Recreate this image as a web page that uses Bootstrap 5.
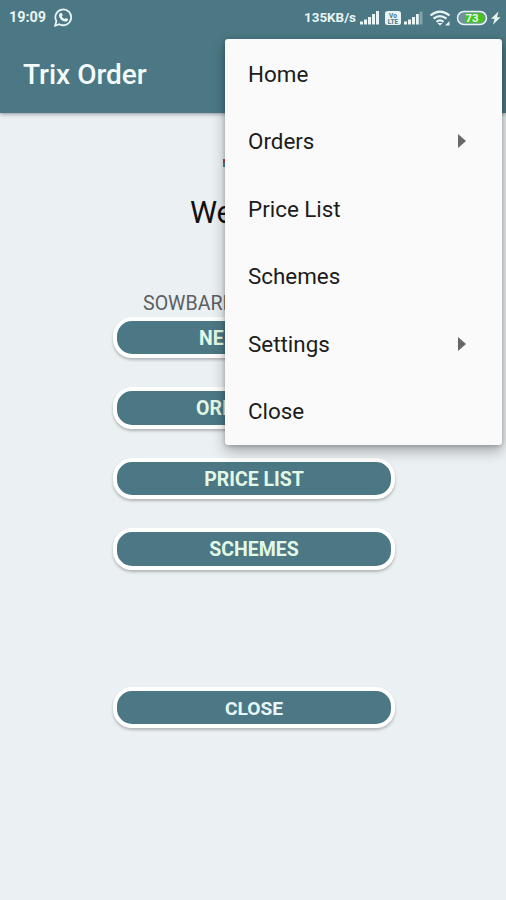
<!DOCTYPE html>
<html lang="en">
<head>
<meta charset="utf-8">
<meta name="viewport" content="width=device-width, initial-scale=1">
<title>Trix Order</title>
<link href="https://cdn.jsdelivr.net/npm/bootstrap@5.3.0/dist/css/bootstrap.min.css" rel="stylesheet">
<style>
body{font-family:Roboto,"Liberation Sans",sans-serif;background:#ebf0f3;height:900px;overflow:hidden}
.top-area{background:#4b7884;height:112.5px;box-shadow:0 1px 4px rgba(40,50,70,.5)}
.status-bar{height:35px;padding:0 4px 0 9px;color:#e9f4f5;font-size:14.4px;font-weight:700;line-height:36px}
.status-bar svg{display:block;flex:none}
.net-speed{font-size:13.4px}
.app-title{height:77px;padding:2px 0 0 23px;color:#f4fbfc;font-size:28px;font-weight:500}
.screen{width:282px;margin-left:113px}
.logo-line{height:46px;margin-top:2.5px;padding:44px 0 0 110px}
.logo-line svg{display:block}
.welcome{font-size:30.5px;line-height:36px;margin-top:34px;padding-left:77px;color:#111}
.company{font-size:19.6px;line-height:24px;margin-top:60.5px;padding-left:30px;color:#5c6062}
.button-stack{margin-top:1px}
.pill{height:41.5px;border:4.5px solid #fff;border-radius:19px;background:#4b7884;color:#e3f9e6;font-size:19.5px;font-weight:700;line-height:32px;padding:2px 0 0;box-shadow:0 2px 3px rgba(0,0,0,.25);margin-bottom:29px}
.pill-new{text-align:left;padding-left:82px}
.pill-orders{text-align:left;padding-left:79px}
.pill-close{margin-top:117px;color:#e7f6fa;font-size:19.2px}
.overflow-menu{left:225px;top:39px;width:277px;height:406px;border:0;border-radius:3px;background:#fafafa;padding:1px 0 0;box-shadow:0 6px 14px rgba(0,0,0,.3),0 1px 4px rgba(0,0,0,.2)}
.overflow-menu .dropdown-item{height:67.5px;padding:2px 36px 0 23px;font-size:22.4px;color:#1c1c1c}
.overflow-menu svg{margin-bottom:2px}
</style>
</head>
<body>
<header class="top-area">
  <div class="status-bar d-flex align-items-center">
    <span>19:09</span>
    <svg class="ms-2" width="19" height="19" viewBox="0 0 19 19" fill="none" stroke="#e9f4f5"><path stroke-width="1.8" d="M1.2 17.6l1.2-4.4a7.9 7.9 0 1 1 3 3z"/><path stroke="none" fill="#e9f4f5" d="M6.4 4.9h1.3l1 2.4-.9 1.2c.7 1.3 1.6 2 2.8 2.6l1.1-1.2 2.4 1.1c0 1.7-1.1 2.6-2.4 2.6-3.7-.4-6.3-3-6.8-6.2 0-1 .7-2.1 1.5-2.5z"/></svg>
    <div class="d-flex align-items-center ms-auto">
      <span class="net-speed">135KB/s</span>
      <svg width="146" height="18" viewBox="0 0 146 18" fill="#e9f4f5">
        <path d="M4 15.500v-3h3v3zM8 15.500v-5h3v5zM12 15.500V8h3v7.500zM16 15.500V5h3v10.500zM20 15.500V2h3v13.500z"/>
        <rect x="29" y="2" width="16" height="14" rx="2.500"/>
        <text x="37" y="8.500" font-size="6.500" font-weight="700" text-anchor="middle" fill="#4b7884">Vo</text>
        <text x="37" y="14.800" font-size="6.500" font-weight="700" text-anchor="middle" fill="#4b7884">LTE</text>
        <path d="M48 15.500v-3h3v3zM52 15.500v-5h3v5zM56 15.500V8h3v7.500zM60 15.500V5h2.800v10.500z"/><path opacity=".35" d="M63.500 15.500V2.500h3v13z"/>
        <g fill="none" stroke="#e9f4f5" stroke-width="2.200"><path d="M74.500 6.500q9.500-7.600 19 0M77.500 9.700q6.500-5.200 13 0M80.500 12.800q3.500-2.700 7 0"/></g>
        <path d="M81.500 14h5L84 16.800zM89 16.500l4.500-4.500v4.500z"/>
        <rect x="101.500" y="2.500" width="29" height="13" rx="6.500" fill="#6e939b" stroke="#e9f4f5" stroke-width="1.500"/>
        <path fill="#45c51c" d="M109 4.300h15.500q3.800 1 3.800 4.700t-3.800 4.700H109z"/>
        <text x="116" y="13.200" font-size="11.500" font-weight="700" text-anchor="middle">73</text>
        <path d="M142.500 2.500l-7.500 7.300h3.500l-1.500 6 7.500-7.500H141z"/>
      </svg>
    </div>
  </div>
  <div class="app-title d-flex align-items-center">Trix Order</div>
</header>

<main class="screen">
  <div class="logo-line"><svg width="4" height="9" viewBox="0 0 4 9"><path fill="#b5475f" d="M0 0h4v4H0z"/><path fill="#4287a4" d="M0 4h4v4H0z"/></svg></div>
  <div class="welcome">We</div>
  <div class="company">SOWBARI</div>
  <div class="button-stack d-flex flex-column">
    <button class="btn pill pill-new" type="button">NE</button>
    <button class="btn pill pill-orders" type="button">ORI</button>
    <button class="btn pill" type="button">PRICE LIST</button>
    <button class="btn pill mb-0" type="button">SCHEMES</button>
    <button class="btn pill pill-close" type="button">CLOSE</button>
  </div>
</main>

<div class="dropdown-menu overflow-menu show">
  <a class="dropdown-item d-flex align-items-center" href="#">Home</a>
  <a class="dropdown-item d-flex align-items-center justify-content-between" href="#">Orders<svg width="8" height="14" viewBox="0 0 8 14"><path fill="#686868" d="M0 0l8 7-8 7z"/></svg></a>
  <a class="dropdown-item d-flex align-items-center" href="#">Price List</a>
  <a class="dropdown-item d-flex align-items-center" href="#">Schemes</a>
  <a class="dropdown-item d-flex align-items-center justify-content-between" href="#">Settings<svg width="8" height="14" viewBox="0 0 8 14"><path fill="#686868" d="M0 0l8 7-8 7z"/></svg></a>
  <a class="dropdown-item d-flex align-items-center" href="#">Close</a>
</div>
<script src="https://cdn.jsdelivr.net/npm/bootstrap@5.3.0/dist/js/bootstrap.bundle.min.js"></script>
</body>
</html>
